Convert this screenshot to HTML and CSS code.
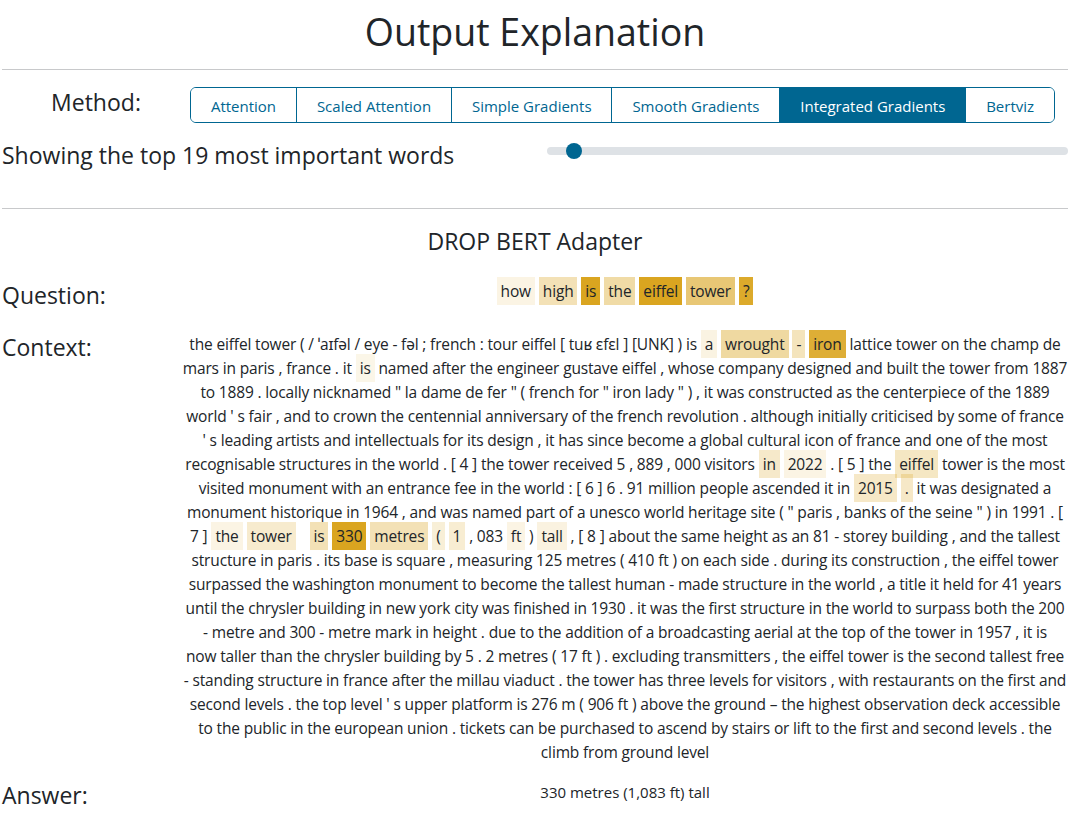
FILE: index.html
```html
<!DOCTYPE html>
<html lang="en">
<head>
<meta charset="utf-8">
<title>Output Explanation</title>
<link rel="stylesheet" href="styles.css">
</head>
<body>
<main class="page">
  <h1 class="title">Output Explanation</h1>
  <hr class="rule">
  <div class="method-row">
    <div class="method-label">Method:</div>
    <div class="btn-group">
      <button class="btn">Attention</button>
      <button class="btn">Scaled Attention</button>
      <button class="btn">Simple Gradients</button>
      <button class="btn">Smooth Gradients</button>
      <button class="btn active">Integrated Gradients</button>
      <button class="btn">Bertviz</button>
    </div>
  </div>
  <div class="topk-row">
    <div class="topk-label">Showing the top 19 most important words</div>
    <div class="slider-wrap"><input class="slider" type="range" min="1" max="480" value="19"></div>
  </div>
  <hr class="rule rule-2">
  <h2 class="model">DROP BERT Adapter</h2>

  <div class="row row-question">
    <div class="row-label">Question:</div>
    <div class="row-body tokens"><span class="tok" style="--w:.12">how</span> <span class="tok" style="--w:.33">high</span> <span class="tok" style="--w:1">is</span> <span class="tok" style="--w:.4">the</span> <span class="tok" style="--w:1">eiffel</span> <span class="tok" style="--w:.62">tower</span> <span class="tok" style="--w:.95">?</span></div>
  </div>

  <div class="row row-context">
    <div class="row-label">Context:</div>
    <p class="row-body context">the eiffel tower ( / ˈaɪfəl / eye - fəl ; french : tour eiffel [ tuʁ ɛfɛl ] [UNK] ) is <span class="tok" style="--w:.13">a</span> <span class="tok" style="--w:.42">wrought</span> <span class="tok" style="--w:.3">-</span> <span class="tok" style="--w:.9">iron</span> lattice tower on the champ de<br>mars in paris , france . it <span class="tok" style="--w:.1">is</span> named after the engineer gustave eiffel , whose company designed and built the tower from 1887<br>to 1889 . locally nicknamed " la dame de fer " ( french for " iron lady " ) , it was constructed as the centerpiece of the 1889<br>world ' s fair , and to crown the centennial anniversary of the french revolution . although initially criticised by some of france<br>' s leading artists and intellectuals for its design , it has since become a global cultural icon of france and one of the most<br>recognisable structures in the world . [ 4 ] the tower received 5 , 889 , 000 visitors <span class="tok" style="--w:.24">in</span> <span class="tok" style="--w:.12">2022</span> . [ 5 ] the <span class="tok" style="--w:.27">eiffel</span> tower is the most<br>visited monument with an entrance fee in the world : [ 6 ] 6 . 91 million people ascended it in <span class="tok" style="--w:.25">2015</span> <span class="tok" style="--w:.25">.</span> it was designated a<br>monument historique in 1964 , and was named part of a unesco world heritage site ( " paris , banks of the seine " ) in 1991 . [<br>7 ] <span class="tok" style="--w:.12">the</span> <span class="tok" style="--w:.22">tower</span> <span class="tok gap" style="--w:.33">is</span> <span class="tok" style="--w:1">330</span> <span class="tok" style="--w:.33">metres</span> <span class="tok" style="--w:.18">(</span> <span class="tok" style="--w:.2">1</span> , 083 <span class="tok" style="--w:.12">ft</span> ) <span class="tok" style="--w:.14">tall</span> , [ 8 ] about the same height as an 81 - storey building , and the tallest<br>structure in paris . its base is square , measuring 125 metres ( 410 ft ) on each side . during its construction , the eiffel tower<br>surpassed the washington monument to become the tallest human - made structure in the world , a title it held for 41 years<br>until the chrysler building in new york city was finished in 1930 . it was the first structure in the world to surpass both the 200<br>- metre and 300 - metre mark in height . due to the addition of a broadcasting aerial at the top of the tower in 1957 , it is<br>now taller than the chrysler building by 5 . 2 metres ( 17 ft ) . excluding transmitters , the eiffel tower is the second tallest free<br>- standing structure in france after the millau viaduct . the tower has three levels for visitors , with restaurants on the first and<br>second levels . the top level ' s upper platform is 276 m ( 906 ft ) above the ground – the highest observation deck accessible<br>to the public in the european union . tickets can be purchased to ascend by stairs or lift to the first and second levels . the<br>climb from ground level</p>
  </div>

  <div class="row row-answer">
    <div class="row-label">Answer:</div>
    <div class="row-body answer">330 metres (1,083 ft) tall</div>
  </div>
</main>
</body>
</html>
```

FILE: styles.css
```css
body {
  margin: 0;
  font-family: "Open Sans", "Noto Sans", sans-serif;
  color: #212529;
  background: #fff;
}

.page {
  margin: 0 22px 0 2px;
}

.title {
  margin: 8px 0 0;
  font-size: 37.5px;
  font-weight: 400;
  line-height: 48px;
  text-align: center;
}

.rule {
  margin: 13px 0 0;
  border: 0;
  border-top: 1px solid #c8c9cb;
}

.method-row {
  display: grid;
  grid-template-columns: 188px 1fr;
  align-items: start;
  margin-top: 17px;
}

.method-label {
  font-size: 23px;
  line-height: 30px;
  text-align: center;
}

.btn-group {
  display: flex;
  height: 36px;
  margin-right: 13px;
  border: 1px solid #006691;
  border-radius: 6px;
  overflow: hidden;
  box-sizing: border-box;
}

.btn {
  flex: 1 1 auto;
  padding: 1px 0 0;
  border: 0;
  border-left: 1px solid #006691;
  background: #fff;
  color: #006691;
  font-family: inherit;
  font-size: 15px;
}

.btn:first-child {
  border-left: 0;
}

.btn.active {
  background: #006691;
  color: #fff;
}

.topk-row {
  display: grid;
  grid-template-columns: 1fr 1fr;
  margin-top: 16px;
}

.topk-label {
  font-size: 23px;
  line-height: 32px;
}

.slider-wrap {
  padding-left: 12px;
  padding-top: 4px;
}

.slider {
  -webkit-appearance: none;
  appearance: none;
  display: block;
  width: 100%;
  height: 16px;
  margin: 0;
  background: transparent;
}

.slider::-webkit-slider-runnable-track {
  height: 8px;
  border-radius: 4px;
  background: #dee2e6;
}

.slider::-webkit-slider-thumb {
  -webkit-appearance: none;
  appearance: none;
  width: 16px;
  height: 16px;
  margin-top: -4px;
  border: 0;
  border-radius: 50%;
  background: #006691;
}

.rule-2 {
  margin-top: 37px;
}

.model {
  margin: 17px 0 0;
  font-size: 23px;
  font-weight: 400;
  line-height: 30px;
  text-align: center;
}

.row {
  display: grid;
  grid-template-columns: 180px 1fr;
  align-items: start;
}

.row-label {
  font-size: 23px;
  line-height: 30px;
}

.row-body {
  margin: 0;
  font-size: 15.5px;
  letter-spacing: -0.16px;
  line-height: 24px;
  text-align: center;
}

.tokens {
  line-height: 22px;
}

.row-question {
  margin-top: 24px;
}

.row-context {
  margin-top: 22px;
}

.context {
  white-space: nowrap;
}

.row-answer {
  margin-top: 16px;
}

.answer {
  font-size: 15px;
  line-height: 24px;
  letter-spacing: 0;
}

.tok {
  padding: 3px 4px;
  background: rgba(218, 165, 32, var(--w));
}

.tok.gap {
  margin-left: 10px;
}
```
